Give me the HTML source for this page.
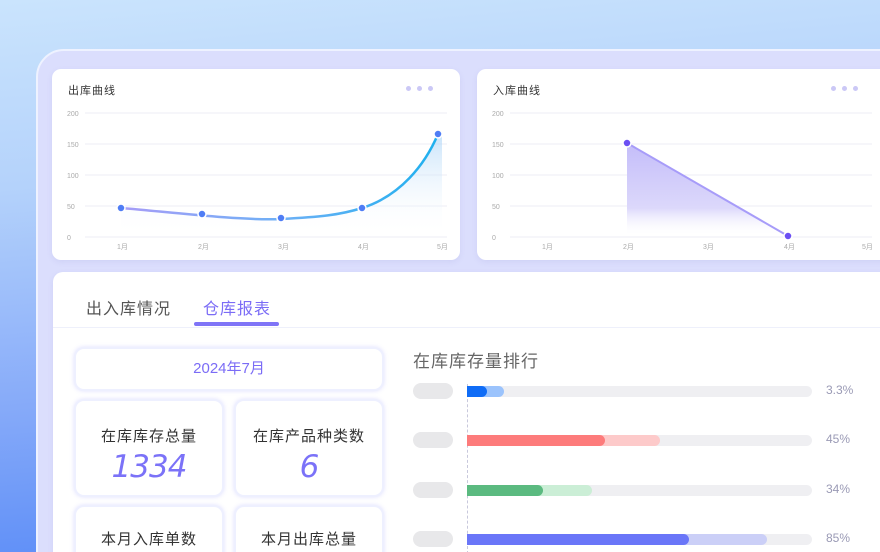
<!DOCTYPE html>
<html><head><meta charset="utf-8"><style>
*{margin:0;padding:0;box-sizing:border-box}
html,body{width:880px;height:552px;overflow:hidden}
body{position:relative;font-family:"Liberation Sans","Noto Sans CJK SC",sans-serif;background:linear-gradient(175deg,#cae4fd 0%,#b4d2fb 30%,#86aaf9 65%,#4f84f7 100%)}
.panel{position:absolute;left:36px;top:49px;width:880px;height:540px;border-radius:28px;background:#dbdefd;border:2px solid #eef2ff}
.card{position:absolute;background:#fff;border-radius:9px;box-shadow:0 2px 6px rgba(120,120,200,.12)}
.t{position:absolute;font-size:11px;color:#333;letter-spacing:1px}
.dots{position:absolute;display:flex;gap:6px}
.dots i{width:5px;height:5px;border-radius:50%;background:#cbc8f6;display:block}
svg text{font-family:"Liberation Sans","Noto Sans CJK SC",sans-serif;font-size:7px;fill:#aaa}
.box{position:absolute;background:#fff;border-radius:10px;border:2px solid #eef0ff;box-shadow:0 0 4px rgba(130,130,255,.25);text-align:center}
.lbl{font-size:15px;color:#333;letter-spacing:1px}
.num{font-size:31px;color:#7b72f8;font-style:italic;font-family:"DejaVu Sans",sans-serif;letter-spacing:-1px;margin-top:4px;line-height:34px}
.row{position:absolute;left:413px;height:16px;width:460px}
.pill{position:absolute;left:0;top:0;width:40px;height:16px;border-radius:8px;background:#e8e8ea}
.track{position:absolute;left:54px;top:3px;width:345px;height:11px;border-radius:6px;background:#efeff2}
.b2,.b1{position:absolute;left:0;top:0;height:11px;border-radius:0 6px 6px 0}
.pct{position:absolute;left:413px;top:0;font-size:12px;color:#9a9ab5}
</style></head><body>
<div class="panel"></div>
<div class="card" style="left:52px;top:69px;width:408px;height:191px">
 <div class="t" style="left:16px;top:13px">出库曲线</div>
 <div class="dots" style="left:354px;top:17px"><i></i><i></i><i></i></div>
</div>
<div class="card" style="left:477px;top:69px;width:420px;height:191px">
 <div class="t" style="left:16px;top:13px">入库曲线</div>
 <div class="dots" style="left:354px;top:17px"><i></i><i></i><i></i></div>
</div>
<svg style="position:absolute;left:0;top:0" width="880" height="270">
<defs>
<linearGradient id="a1" x1="0" y1="0" x2="0" y2="1"><stop offset="0" stop-color="#a9d3f7" stop-opacity=".8"/><stop offset="1" stop-color="#fff" stop-opacity="0"/></linearGradient>
<linearGradient id="l1" x1="0" x2="1"><stop offset="0" stop-color="#a79cf7"/><stop offset=".5" stop-color="#6fb0f6"/><stop offset="1" stop-color="#1eb0ee"/></linearGradient>
<linearGradient id="a2" x1="0" y1="0" x2="0" y2="1"><stop offset="0" stop-color="#c4bdf9"/><stop offset=".7" stop-color="#dcd8fb"/><stop offset="1" stop-color="#fff" stop-opacity="0"/></linearGradient>
</defs>
<g stroke="#eeeef6" stroke-width="1">
<line x1="85" x2="447" y1="113" y2="113"/><line x1="85" x2="447" y1="144" y2="144"/><line x1="85" x2="447" y1="175" y2="175"/><line x1="85" x2="447" y1="206" y2="206"/><line x1="85" x2="447" y1="237" y2="237"/>
<line x1="510" x2="872" y1="113" y2="113"/><line x1="510" x2="872" y1="144" y2="144"/><line x1="510" x2="872" y1="175" y2="175"/><line x1="510" x2="872" y1="206" y2="206"/><line x1="510" x2="872" y1="237" y2="237"/>
</g>
<g><text x="67" y="116">200</text><text x="67" y="147">150</text><text x="67" y="178">100</text><text x="67" y="209">50</text><text x="67" y="240">0</text>
<text x="117" y="249">1月</text><text x="198" y="249">2月</text><text x="278" y="249">3月</text><text x="358" y="249">4月</text><text x="437" y="249">5月</text>
<text x="492" y="116">200</text><text x="492" y="147">150</text><text x="492" y="178">100</text><text x="492" y="209">50</text><text x="492" y="240">0</text>
<text x="542" y="249">1月</text><text x="623" y="249">2月</text><text x="703" y="249">3月</text><text x="784" y="249">4月</text><text x="862" y="249">5月</text></g>
<path d="M121 208 C160 211 240 221 281 219 C320 217 340 215 362 208 C400 196 425 165 438 134 L442 134 L442 237 L121 237Z" fill="url(#a1)" opacity=".8"/>
<path d="M121 208 C160 211 240 221 281 219 C320 217 340 215 362 208 C400 196 425 165 438 134" fill="none" stroke="url(#l1)" stroke-width="2.5"/>
<g fill="#4f7df5" stroke="#fff" stroke-width="1.5"><circle cx="121" cy="208" r="4"/><circle cx="202" cy="214" r="4"/><circle cx="281" cy="218" r="4"/><circle cx="362" cy="208" r="4"/><circle cx="438" cy="134" r="4"/></g>
<path d="M627 143 L788 236 L627 236Z" fill="url(#a2)"/>
<line x1="627" y1="143" x2="788" y2="236" stroke="#a79cf9" stroke-width="2"/>
<g fill="#6b4ff3" stroke="#fff" stroke-width="1.5"><circle cx="627" cy="143" r="4"/><circle cx="788" cy="236" r="4"/></g>
</svg>
<div class="card" style="left:53px;top:272px;width:840px;height:300px;border-radius:10px">
 <div style="position:absolute;left:0;top:55px;width:100%;height:1px;background:#eef0fb"></div>
</div>
<div style="position:absolute;left:86px;top:295px;font-size:16px;color:#555;letter-spacing:1px">出入库情况</div>
<div style="position:absolute;left:203px;top:295px;font-size:16px;color:#7b6cf6;letter-spacing:1px">仓库报表</div>
<div style="position:absolute;left:194px;top:322px;width:85px;height:4px;border-radius:2px;background:#7f74f7"></div>
<div class="box" style="left:74px;top:347px;width:310px;height:44px;line-height:40px;font-size:15px;color:#7b6cf6">2024年7月</div>
<div class="box" style="left:74px;top:399px;width:150px;height:98px"><div class="lbl" style="margin-top:24px">在库库存总量</div><div class="num">1334</div></div>
<div class="box" style="left:234px;top:399px;width:150px;height:98px"><div class="lbl" style="margin-top:24px">在库产品种类数</div><div class="num">6</div></div>
<div class="box" style="left:74px;top:505px;width:150px;height:98px"><div class="lbl" style="margin-top:21px">本月入库单数</div></div>
<div class="box" style="left:234px;top:505px;width:150px;height:98px"><div class="lbl" style="margin-top:21px">本月出库总量</div></div>
<div style="position:absolute;left:413px;top:347px;font-size:17px;color:#666;letter-spacing:1px">在库库存量排行</div>
<div style="position:absolute;left:467px;top:384px;height:170px;border-left:1px dashed #c8c8dc"></div>
<div class="row" style="top:383px"><div class="pill"></div><div class="track"><div class="b2" style="width:37px;background:#9bc3fc"></div><div class="b1" style="width:20px;background:#0f6cf6"></div></div><div class="pct">3.3%</div></div>
<div class="row" style="top:432px"><div class="pill"></div><div class="track"><div class="b2" style="width:193px;background:#fdcaca"></div><div class="b1" style="width:138px;background:#fd7b7b"></div></div><div class="pct">45%</div></div>
<div class="row" style="top:482px"><div class="pill"></div><div class="track"><div class="b2" style="width:125px;background:#cbeed6"></div><div class="b1" style="width:76px;background:#5bba80"></div></div><div class="pct">34%</div></div>
<div class="row" style="top:531px"><div class="pill"></div><div class="track"><div class="b2" style="width:300px;background:#cbcff7"></div><div class="b1" style="width:222px;background:#6a76f8"></div></div><div class="pct">85%</div></div>
</body></html>
